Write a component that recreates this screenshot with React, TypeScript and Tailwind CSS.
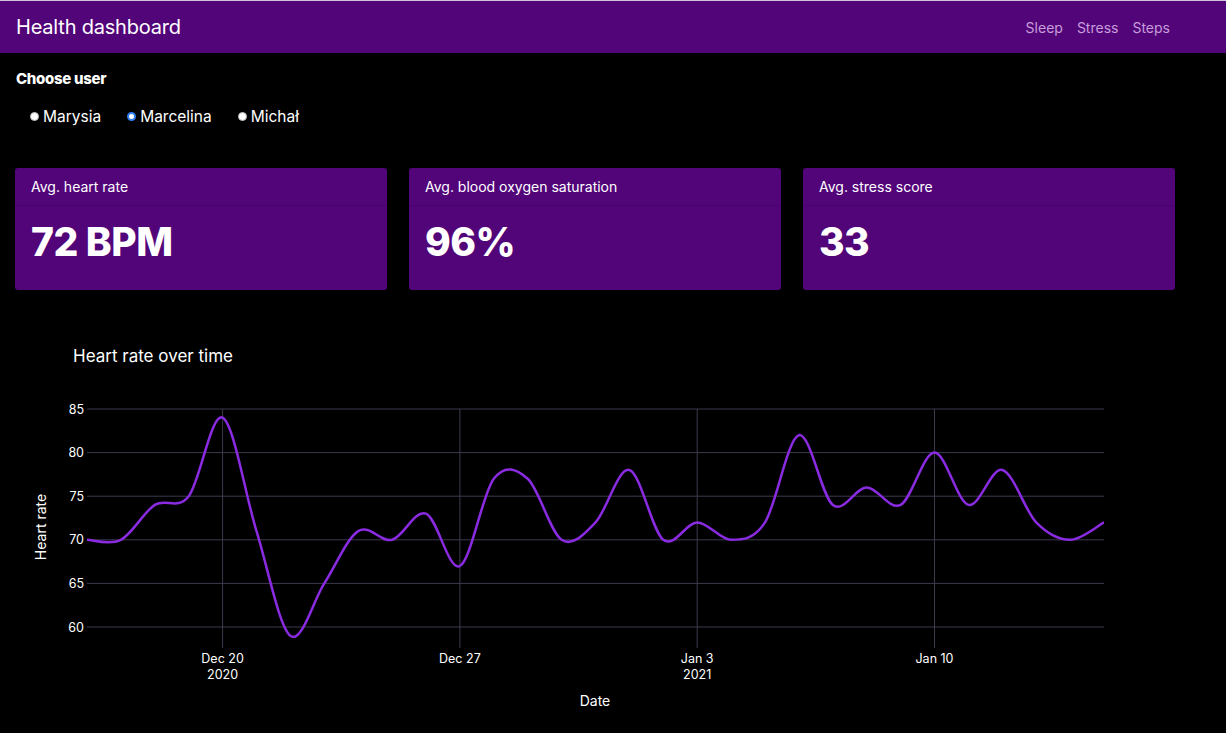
import { useMemo } from "react";

const users = ["Marysia", "Marcelina", "Michał"];

const cards = [
  { title: "Avg. heart rate", value: "72 BPM" },
  { title: "Avg. blood oxygen saturation", value: "96%" },
  { title: "Avg. stress score", value: "33" },
];

// daily values, Dec 16 2020 -> Jan 15 2021
const heartRate = [
  70, 70, 74, 75, 84, 71, 59, 65, 71, 70, 73, 67, 77, 77, 70, 72, 78, 70, 72, 70, 72, 82, 74, 76, 74, 80,
  74, 78, 72, 70, 72,
];

const X0 = 87;
const DAY = 33.9;
const TOP = 79; // svg y of value 85
const STEP = 8.72; // px per bpm

const xAt = (i: number) => X0 + i * DAY;
const yAt = (v: number) => TOP + (85 - v) * STEP;

function splinePath(values: number[]) {
  const pts = values.map((v, i) => [xAt(i), yAt(v)]);
  let d = `M${pts[0][0]},${pts[0][1]}`;
  for (let i = 0; i < pts.length - 1; i++) {
    const p0 = pts[i - 1] ?? pts[i];
    const p1 = pts[i];
    const p2 = pts[i + 1];
    const p3 = pts[i + 2] ?? p2;
    const c1x = p1[0] + (p2[0] - p0[0]) / 6;
    const c1y = p1[1] + (p2[1] - p0[1]) / 6;
    const c2x = p2[0] - (p3[0] - p1[0]) / 6;
    const c2y = p2[1] - (p3[1] - p1[1]) / 6;
    d += ` C${c1x.toFixed(1)},${c1y.toFixed(1)} ${c2x.toFixed(1)},${c2y.toFixed(1)} ${p2[0].toFixed(1)},${p2[1].toFixed(1)}`;
  }
  return d;
}

function HeartRateChart() {
  const path = useMemo(() => splinePath(heartRate), []);
  const ticks = [85, 80, 75, 70, 65, 60];
  const dates = [
    { i: 4, label: "Dec 20", year: "2020" },
    { i: 11, label: "Dec 27" },
    { i: 18, label: "Jan 3", year: "2021" },
    { i: 25, label: "Jan 10" },
  ];

  return (
    <svg width={1226} height={403} className="block" style={{ fontFamily: "Inter, 'Noto Sans', sans-serif" }}>
      <text x={73} y={32} fill="#fff" fontSize={17}>
        Heart rate over time
      </text>
      <defs>
        <clipPath id="plot">
          <rect x={X0} y={60} width={1104 - X0} height={260} />
        </clipPath>
      </defs>
      {dates.map((d) => (
        <line key={d.label} x1={xAt(d.i)} x2={xAt(d.i)} y1={TOP} y2={318} stroke="#3d3a4f" strokeWidth={1} />
      ))}
      {ticks.map((t) => (
        <g key={t}>
          <line x1={X0} x2={1104} y1={yAt(t)} y2={yAt(t)} stroke="#3d3a4f" strokeWidth={1} />
          <text x={84} y={yAt(t) + 4.5} fill="#fff" fontSize={12.5} textAnchor="end">
            {t}
          </text>
        </g>
      ))}
      <path d={path} fill="none" stroke="#8a2be2" strokeWidth={2.5} clipPath="url(#plot)" />
      {dates.map((d) => (
        <text key={d.label} x={xAt(d.i)} y={333} fill="#fff" fontSize={12.5} textAnchor="middle">
          <tspan x={xAt(d.i)}>{d.label}</tspan>
          {d.year && (
            <tspan x={xAt(d.i)} dy={16}>
              {d.year}
            </tspan>
          )}
        </text>
      ))}
      <text x={595} y={376} fill="#fff" fontSize={14} textAnchor="middle">
        Date
      </text>
      <text x={46} y={197} fill="#fff" fontSize={14} textAnchor="middle" transform="rotate(-90 46 197)">
        Heart rate
      </text>
    </svg>
  );
}

export default function App() {
  return (
    <div className="min-h-[733px] bg-black text-white font-['Inter','Noto_Sans',sans-serif]">
      <header className="flex h-[53px] items-center justify-between border-t border-[#cfc4d8] bg-[#520579] pl-4 pr-[58px]">
        <h1 className="text-[20px] tracking-[-0.2px]">Health dashboard</h1>
        <nav className="mr-[-2px] flex gap-[14px] text-[14px] text-[#c79ddb]">
          <span>Sleep</span>
          <span>Stress</span>
          <span>Steps</span>
        </nav>
      </header>

      <section className="px-4 pt-[15px]">
        <h2 className="text-[15px] font-extrabold tracking-[-0.3px]">Choose user</h2>
        <div className="mt-[14px] flex items-center pl-[14px] text-[15.5px]">
          {users.map((u, i) => (
            <label key={u} className="mr-[26px] flex items-center gap-[4px]">
              {i === 1 ? (
                <span className="h-[9px] w-[9px] rounded-full border-[2px] border-[#2f7bf0] bg-white" />
              ) : (
                <span className="h-[9px] w-[9px] rounded-full border border-[#bbb] bg-white" />
              )}
              {u}
            </label>
          ))}
        </div>
      </section>

      <div className="mt-[40px] flex gap-[22px] px-[15px]">
        {cards.map((c) => (
          <div key={c.title} className="h-[122px] w-[372px] rounded-[3px] bg-[#520579]">
            <div className="flex h-[38px] items-center border-b border-[#44046a] px-4 text-[14px]">{c.title}</div>
            <div className="px-4 pt-[12px] text-[39px] font-extrabold leading-[48px] tracking-[-0.5px]">{c.value}</div>
          </div>
        ))}
      </div>

      <div className="mt-[40px]">
        <HeartRateChart />
      </div>
    </div>
  );
}
